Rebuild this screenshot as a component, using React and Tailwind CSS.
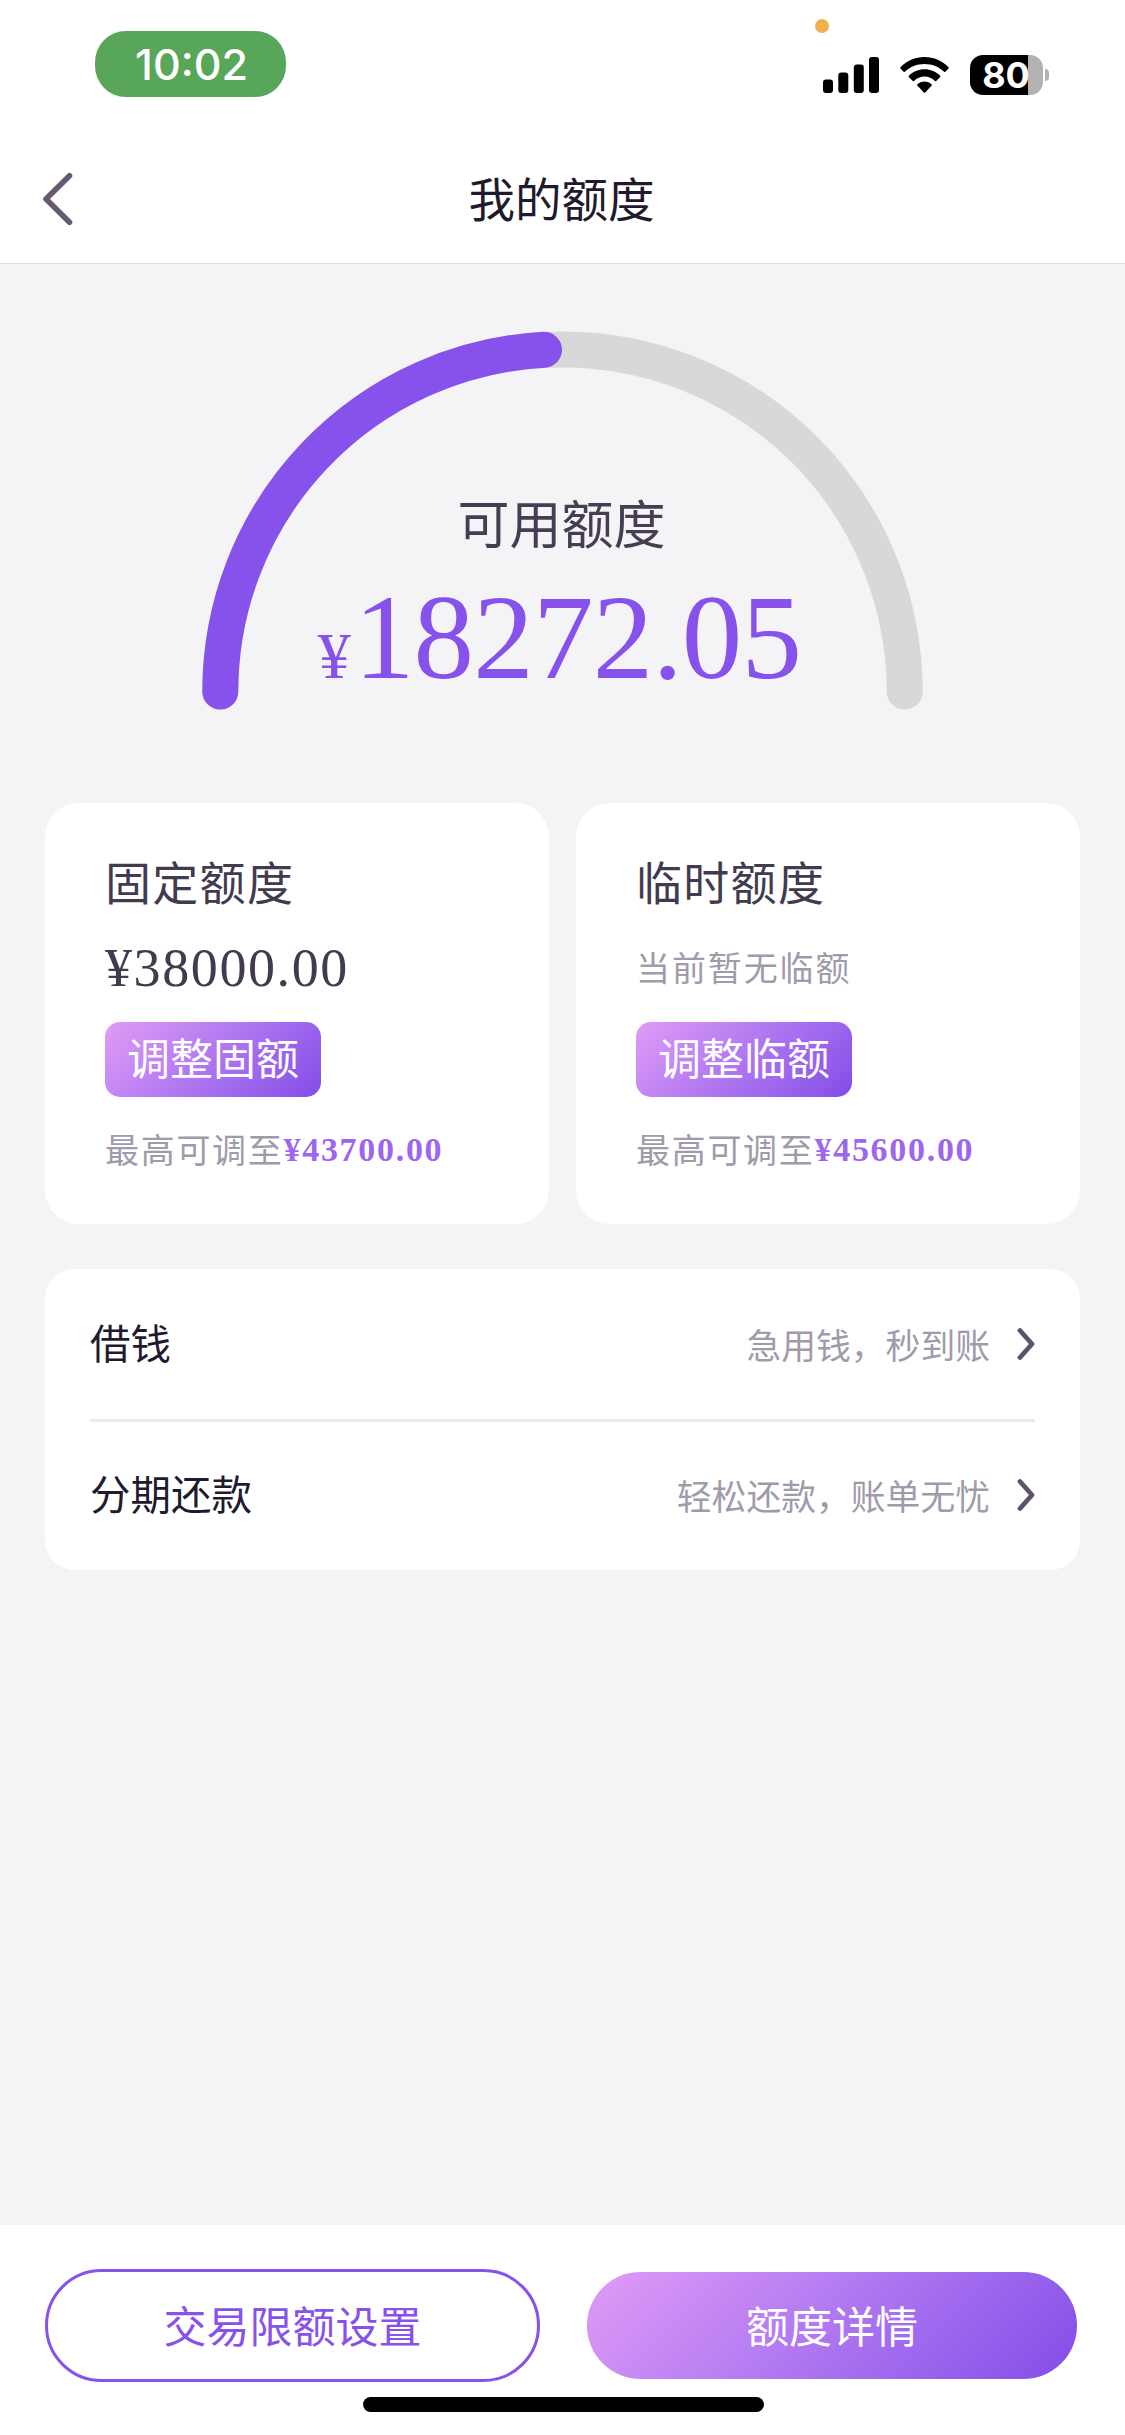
const limitCards = [
  {
    key: 'fixed',
    title: '固定额度',
    amount: '¥38000.00',
    action: '调整固额',
    max: '¥43700.00',
  },
  {
    key: 'temp',
    title: '临时额度',
    empty: '当前暂无临额',
    action: '调整临额',
    max: '¥45600.00',
  },
];

const services = [
  { key: 'loan', title: '借钱', hint: '急用钱，秒到账' },
  { key: 'installment', title: '分期还款', hint: '轻松还款，账单无忧' },
];

function StatusBar() {
  return (
    <div className="relative flex h-[136px] shrink-0 items-start justify-between pt-[31px] pr-[76px] pl-[95px]">
      <span className="absolute top-[19px] left-[815px] size-3.5 rounded-full bg-[#f3ae4e]" />
      <div className="flex h-[66px] w-[191px] items-center justify-center rounded-[31px] bg-[#58a65a] pl-0.5 font-['Inter',sans-serif] text-[43px] leading-none font-medium text-white">
        10:02
      </div>
      <div className="mt-6 flex items-center">
        <svg width="57" height="36" viewBox="0 0 57 36" className="mr-5">
          <rect x="0" y="22.5" width="10" height="13.5" rx="3" />
          <rect x="15.3" y="15.5" width="10" height="20.5" rx="3" />
          <rect x="30.8" y="7.5" width="10" height="28.5" rx="3" />
          <rect x="46" y="0" width="10" height="36" rx="3" />
        </svg>
        <svg width="49" height="36" viewBox="0 0 49 36" className="mr-[21px]">
          <path d="M24.500 0C34 0 42.500 4 48.600 10.200Q49 10.900 48.500 11.500L45.400 14.700Q44.800 15.200 44.100 14.700C38.800 9.700 32 7 24.500 7S10.200 9.700 4.900 14.700Q4.200 15.200 3.600 14.700L.5 11.500Q0 10.900 .4 10.200C6.500 4 15 0 24.500 0Z" />
          <path d="M24.500 12.300C30.500 12.300 36 14.700 40.200 18.700Q40.700 19.300 40.200 19.900L36.200 23.900Q35.600 24.400 35 23.900C32.100 21.200 28.500 19.600 24.500 19.600S16.900 21.200 14 23.900Q13.400 24.400 12.800 23.900L8.800 19.900Q8.300 19.300 8.800 18.700C13 14.700 18.500 12.300 24.500 12.300Z" />
          <path d="M24.500 24.600C27.300 24.600 29.800 25.700 31.700 27.400Q32.200 28 31.700 28.600L25.200 35.400Q24.500 36 23.800 35.400L17.300 28.600Q16.800 28 17.300 27.400C19.200 25.700 21.700 24.600 24.500 24.600Z" />
        </svg>
        <div className="flex h-10 w-[73px] items-center justify-center rounded-[13px] bg-linear-to-r from-black from-[58px] to-[#b2b2b2] to-[58px] font-['Inter',sans-serif] text-[36px] leading-none font-bold text-white">
          80
        </div>
        <span className="ml-[2.500px] h-3 w-1 rounded-r-full bg-[#b2b2b2]" />
      </div>
    </div>
  );
}

function NavBar() {
  return (
    <header className="relative flex h-32 shrink-0 items-center justify-center border-b border-[#dfdfe1] pr-0.5 pb-1">
      <svg
        width="36"
        height="60"
        viewBox="0 0 36 60"
        fill="none"
        stroke="#655a70"
        strokeWidth="5.600"
        strokeLinecap="round"
        strokeLinejoin="round"
        className="absolute top-[33px] left-10"
      >
        <path d="M29.500 6.800L6 30L29.500 53.200" />
      </svg>
      <h1 className="text-[46.500px] leading-none text-[#1f1a2e]">我的额度</h1>
    </header>
  );
}

function Gauge() {
  return (
    <section className="relative h-[539px] shrink-0">
      <svg width="1125" height="539" viewBox="0 264 1125 539" fill="none" strokeWidth="36" strokeLinecap="round">
        <path d="M220.300 691.500A342.200 342.200 0 0 1 904.700 691.500" stroke="#d8d8d8" />
        <path d="M220.300 691.500A342.200 342.200 0 0 1 544 349.800" stroke="#8751eb" />
      </svg>
      <div className="absolute inset-x-0 top-[232px] flex flex-col items-center">
        <p className="mr-0.5 text-[52px] leading-none text-[#463d52]">可用额度</p>
        <p className="mt-[29px] mr-1.5 font-['Liberation_Serif',serif] text-[121px] leading-none tracking-[-0.800px] text-[#8751eb]">
          <span className="mr-1 text-[66px]">¥</span>18272.05
        </p>
      </div>
    </section>
  );
}

function LimitCard({ card }) {
  return (
    <div className="flex h-[421px] flex-1 flex-col items-start rounded-[34px] bg-white pt-[54px] pl-[60px]">
      <h2 className="text-[46px] leading-none tracking-[1.300px] text-[#423a4e]">{card.title}</h2>
      <div className="mt-[33px] flex h-[62px] items-center">
        {card.amount ? (
          <p className="pt-0.5 font-['Liberation_Serif',serif] text-[54px] leading-none tracking-[1.600px] text-[#423a4e]">
            {card.amount}
          </p>
        ) : (
          <p className="text-[34px] leading-none tracking-[1.900px] text-[#9f9bab]">{card.empty}</p>
        )}
      </div>
      <button className="mt-6 h-[75px] w-[216px] rounded-[15px] bg-linear-135 from-[#e09bf6] to-[#834ce8] pb-1.5 text-[43px] leading-none text-white">
        {card.action}
      </button>
      <p className="mt-[34px] flex items-center text-[34px] leading-none tracking-[1.700px] text-[#9f9bab]">
        最高可调至
        <span className="pt-0.5 font-['Liberation_Serif',serif] font-bold text-[#9e65ee]">{card.max}</span>
      </p>
    </div>
  );
}

function ServiceRow({ service }) {
  return (
    <div className="flex h-[146px] items-center first:h-[153px]">
      <span className="flex-1 pb-1 text-[40.500px] leading-none text-[#1f1a2e]">{service.title}</span>
      <span className="mr-[27px] text-[34.800px] leading-none text-[#9f9bab]">{service.hint}</span>
      <svg
        width="18"
        height="34"
        viewBox="0 0 18 34"
        fill="none"
        stroke="#5d5269"
        strokeWidth="4.800"
        strokeLinecap="round"
        strokeLinejoin="round"
      >
        <path d="M3 3.500L15 17L3 30.500" />
      </svg>
    </div>
  );
}

export default function App() {
  return (
    <div className="flex h-[2435px] w-[1125px] flex-col bg-white font-['Noto_Sans_CJK_SC',sans-serif]">
      <StatusBar />
      <NavBar />
      <main className="flex flex-1 flex-col bg-[#f4f4f7]">
        <Gauge />
        <div className="flex gap-[27px] px-[45px]">
          {limitCards.map((card) => (
            <LimitCard key={card.key} card={card} />
          ))}
        </div>
        <div className="mx-[45px] mt-[45px] h-[301px] divide-y-3 divide-[#ebebed] rounded-[30px] bg-white px-[45px]">
          {services.map((service) => (
            <ServiceRow key={service.key} service={service} />
          ))}
        </div>
      </main>
      <footer className="relative flex h-[210px] shrink-0 items-start justify-between pt-11 pr-12 pl-[45px]">
        <button className="h-[113px] w-[495px] rounded-full border-3 border-[#8751eb] pb-0.5 text-[43px] leading-none text-[#8751eb]">
          交易限额设置
        </button>
        <button className="mt-[3px] h-[107px] w-[490px] rounded-full bg-linear-135 from-[#e09bf6] to-[#834ce8] pb-0.5 text-[43px] leading-none text-white">
          额度详情
        </button>
        <span className="absolute top-[172px] left-[363px] h-[15px] w-[401px] rounded-full bg-black" />
      </footer>
    </div>
  );
}
